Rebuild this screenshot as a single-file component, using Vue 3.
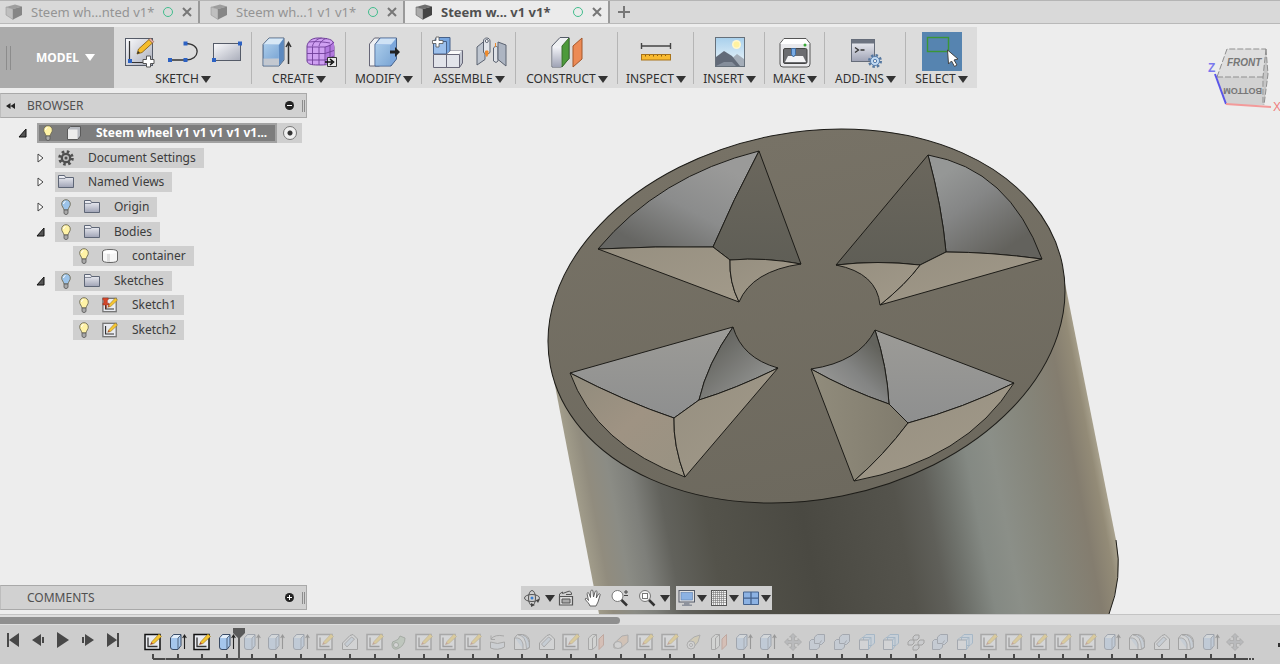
<template>
  <div class="app">
    <!-- 图标库 -->
    <svg class="sprite" width="0" height="0" aria-hidden="true">
      <defs>
        <linearGradient id="steel" x1="0" y1="0" x2="1" y2="1">
          <stop offset="0" stop-color="#fbfbfd" />
          <stop offset="1" stop-color="#a9adba" />
        </linearGradient>
        <linearGradient id="steelV" x1="0" y1="0" x2="0" y2="1">
          <stop offset="0" stop-color="#f4f5f9" />
          <stop offset="1" stop-color="#9fa3b5" />
        </linearGradient>
        <linearGradient id="blue" x1="0" y1="0" x2="1" y2="1">
          <stop offset="0" stop-color="#a9cbea" />
          <stop offset="1" stop-color="#7fa9d6" />
        </linearGradient>
        <linearGradient id="sky" x1="0" y1="0" x2="0" y2="1">
          <stop offset="0" stop-color="#a8d0ec" />
          <stop offset="1" stop-color="#eef6fa" />
        </linearGradient>
      </defs>

      <symbol id="i-sketch" viewBox="0 0 32 32">
        <rect x="2.500" y="2.500" width="27" height="27" fill="url(#steel)" stroke="#555b68" />
        <path d="M6.500 5v21.500H26" fill="none" stroke="#333" stroke-width="1.200" />
        <rect x="5" y="23" width="4" height="4" fill="#2c62c4" />
        <path d="M14 18l1.500-5L26 3.500l3.500 3.500L19 16.500z" fill="#f5bd2d" stroke="#80580f" stroke-width=".8" />
        <path d="M26 3.500l1.500-1.200 3.400 3.400-1.400 1.300z" fill="#efb5a5" stroke="#8a5b4b" stroke-width=".6" />
        <path d="M14 18l1-3 2 1.800z" fill="#333" />
        <path d="M23.500 20h4v3.500H31v4h-3.500V31h-4v-3.500H20v-4h3.500z" fill="#fff" stroke="#555" />
      </symbol>
      <symbol id="i-line" viewBox="0 0 32 32">
        <path d="M3 24h16M18 7.500c17 0 15 16.500 1 16.500" fill="none" stroke="#333" stroke-width="1.300" />
        <path d="M1 22h4v4H1zM16.500 22h4v4h-4zM16.500 5.500h4v4h-4z" fill="#2c62c4" />
      </symbol>
      <symbol id="i-rect" viewBox="0 0 32 32">
        <rect x="2.500" y="7.500" width="27" height="17" fill="url(#steel)" stroke="#555b68" />
        <path d="M1 22h4v4H1zM27 5.500h4v4h-4z" fill="#2c62c4" />
      </symbol>
      <symbol id="i-extrude" viewBox="0 0 32 32">
        <path d="M2 8.500l6-6.500h15v22l-5 6H2z" fill="#86b0dd" stroke="#52657e" />
        <path d="M2.500 8.500L8 2.500h14.500L18 8.500z" fill="#d8e8f5" />
        <path d="M3 9h14v13H3z" fill="url(#blue)" />
        <path d="M2.500 22.500H18v7H2.500z" fill="#c3c8d0" />
        <path d="M18 9l4.500-6v20.500L18 29.500z" fill="#5c89bf" />
        <path d="M27.500 28V8M25 11l2.500-4.500L30 11" fill="none" stroke="#333" stroke-width="1.500" />
      </symbol>
      <symbol id="i-form" viewBox="0 0 32 32">
        <path d="M2 10c1-5 5-8 11-8 7 0 14 1 15 4l1 5v13c-2 4-7 5-13 5-8 0-13 0-14-4z" fill="#cfa0f2" stroke="#6f3e99" />
        <path d="M20 11l9-5v18l-8 5z" fill="#b279df" />
        <path d="M2 11h18c4-1 7-2 9-5M2 17.500h18l9-3M2 24h18l9-4M7.500 10.500V29M14 11v18M20 11v18M25 9v18M7.500 10c1-4 4-7 9-8M14 10c1-4 4-7 8-7.500M4 6c7-1 15 0 21 1" fill="none" stroke="#6f3e99" stroke-width=".9" />
        <path d="M22.500 21.500h9v9h-9z" fill="#e8e8e8" stroke="#333" />
        <path d="M20 26h7M25 23l3.500 3-3.500 3" fill="none" stroke="#111" stroke-width="1.600" />
      </symbol>
      <symbol id="i-modify" viewBox="0 0 32 32">
        <path d="M1.500 8l5-6h5v28h-10z" fill="#eef0f3" stroke="#667" />
        <path d="M7 8.500L12 2h16.500v21L23 30H7z" fill="#7ca7dc" stroke="#46618a" />
        <path d="M7.500 8.500l5-6H28l-5 6z" fill="#cfe2f5" />
        <path d="M7.500 9H22v20.500H7.500z" fill="url(#blue)" />
        <path d="M22 14.500h5V11l5 5-5 5v-3.500h-5z" fill="#222" />
      </symbol>
      <symbol id="i-component" viewBox="0 0 32 32">
        <path d="M2.500 6l3-4.500H19V18h-14z" fill="#77a6e0" stroke="#46618a" />
        <path d="M2.500 5.500h13V18h-13z" fill="#9cc0ec" stroke="#46618a" />
        <path d="M15.500 18.500l4-4h12V27l-3 4.500h-13z" fill="#c4c8d2" stroke="#667" />
        <path d="M2.500 18.500h13v13h-13zM15.500 18.500h13v13h-13z" fill="#e2e4ea" stroke="#667" />
        <path d="M16 18l4-3.500h11L28 18z" fill="#fafafa" />
        <path d="M5 1h3v3.500h4v3H8V11H5V7.500H1.500v-3H5z" fill="#fff" stroke="#555" stroke-width=".8" />
      </symbol>
      <symbol id="i-joint" viewBox="0 0 32 32">
        <path d="M2 11l8-6.500v19L2 29z" fill="#bfc6d0" stroke="#5b6270" />
        <path d="M8.500 5c0-4 6.500-4 6.500 0v11.500l-3 2-3.500-2z" fill="#e2e5ea" stroke="#5b6270" />
        <circle cx="11.800" cy="5" r="1.500" fill="#fff" stroke="#5b6270" />
        <path d="M18.500 12c1-2 4.500-2 4.500 0v13l-2 1.500-2.500-1.500z" fill="#dfe2e7" stroke="#5b6270" />
        <path d="M23 6l8 3v21l-8-6.500z" fill="#adb5c2" stroke="#5b6270" />
        <path d="M10.500 15h2.500v3l-1.200 2.500-1.300-2.500zM20.500 7v4" fill="#ef8b2c" stroke="#ef8b2c" />
      </symbol>
      <symbol id="i-construct" viewBox="0 0 32 32">
        <path d="M1 10l8-8.500h9v21L10.500 31H1z" fill="#eef0f2" stroke="#555b68" />
        <path d="M1.500 10.500h9V31h-9z" fill="url(#steelV)" />
        <path d="M11 10l7-8v20.500L11 31z" fill="#4d9a3b" stroke="#396d2c" />
        <path d="M22 10l9-8v21l-9 8z" fill="#ec8a55" stroke="#a4562b" />
      </symbol>
      <symbol id="i-measure" viewBox="0 0 32 32">
        <path d="M1.500 7v6M30.500 7v6M1.500 10h29" fill="none" stroke="#444" stroke-width="1.400" />
        <rect x="1.500" y="18.500" width="29" height="5.500" fill="#f8ba31" stroke="#a9741a" />
        <path d="M5.500 19v1.500M9.500 19v1M13.500 19v1.500M17.500 19v1M21.500 19v1.500M25.500 19v1" stroke="#8a5f13" />
      </symbol>
      <symbol id="i-picture" viewBox="0 0 32 32">
        <rect x="1.500" y="1.500" width="29" height="29" fill="url(#sky)" stroke="#66707a" />
        <circle cx="22.500" cy="8.500" r="4.500" fill="#fff8cf" />
        <circle cx="22.500" cy="8.500" r="3" fill="#fff2a0" />
        <path d="M14 26l9-8 7 5v7H14z" fill="#a4adb8" />
        <path d="M2 21l8-6 8 5 8 10H2z" fill="#626a78" />
        <path d="M2 30l8-4 8 0 4 4z" fill="#858e9b" />
      </symbol>
      <symbol id="i-make" viewBox="0 0 32 32">
        <path d="M5 2.500h22l4 5V28q0 3-3 3H4q-3 0-3-3V7.500z" fill="#e9e9ec" stroke="#555" />
        <path d="M5 3h22l3.500 5h-29z" fill="#fff" />
        <rect x="4.500" y="12.500" width="23.500" height="15" rx="1.500" fill="#6b6c70" stroke="#444" />
        <path d="M9 20h15l3 6H6z" fill="#f4f4f6" />
        <path d="M12.500 12.500h4v6l-2 2.500-2-2.500z" fill="#79abe4" stroke="#3f6ea5" />
        <circle cx="26" cy="9" r="1.500" fill="#37a935" />
      </symbol>
      <symbol id="i-addins" viewBox="0 0 32 32">
        <rect x="1.500" y="3.500" width="23" height="22" fill="url(#steelV)" stroke="#666d7a" />
        <path d="M2 4h22v3.500H2z" fill="#6d7481" />
        <path d="M5 11.500l3.500 2.500L5 16.500M10.500 14h4" fill="none" stroke="#333" stroke-width="1.300" />
        <circle cx="25" cy="25" r="5.500" fill="none" stroke="#55779f" stroke-width="3" stroke-dasharray="2.300 2" />
        <circle cx="25" cy="25" r="4.500" fill="#c3dcf5" stroke="#5a7fae" />
        <circle cx="25" cy="25" r="1.700" fill="#e8e8e8" stroke="#5a7fae" />
      </symbol>
      <symbol id="i-select" viewBox="0 0 40 39">
        <rect x="5.500" y="5.500" width="21" height="14" fill="none" stroke="#3b9636" stroke-width="1.400" />
        <path d="M25.500 18l1 14 3-3 3 5.500 2.500-1.500-3-5 4-1z" fill="#fff" stroke="#444" />
      </symbol>

      <symbol id="i-cube" viewBox="0 0 18 16">
        <path d="M1 3l9-2.500L17 2.500 8 5z" fill="#6e6e6e" />
        <path d="M1 3l7 2v10.500L1 11z" fill="#aaa" stroke="#555" stroke-width=".5" />
        <path d="M8 5l9-2.500V11l-9 4.500z" fill="#444" />
      </symbol>
      <symbol id="i-bulb" viewBox="0 0 12 16">
        <path d="M6 .7a4.300 4.300 0 0 0-4.300 4.500c0 2.300 1.800 3.200 2.300 5.800h4c.5-2.600 2.300-3.500 2.300-5.800A4.300 4.300 0 0 0 6 .7z" fill="currentColor" stroke="#6d6a55" stroke-width=".9" />
        <path d="M4 11h4v3.500L6 15.700l-2-1.200z" fill="#a9a9a9" stroke="#555" stroke-width=".8" />
        <path d="M3.500 5q0-2 2-2.500" fill="none" stroke="#fff" />
      </symbol>
      <symbol id="i-box" viewBox="0 0 16 16">
        <path d="M1.500 4l3-2.500h10v9.500l-3 3.500h-10z" fill="#b7bac0" stroke="#5b5b5b" />
        <path d="M2 4.500h9.500V14H2z" fill="#ececec" />
      </symbol>
      <symbol id="i-gear" viewBox="0 0 16 16">
        <circle cx="8" cy="8" r="6.300" fill="none" stroke="#4f4f4f" stroke-width="3" stroke-dasharray="2.500 2.450" />
        <circle cx="8" cy="8" r="4.200" fill="#bbb" stroke="#4f4f4f" stroke-width="2.200" />
        <circle cx="8" cy="8" r="1.500" fill="#4f4f4f" />
      </symbol>
      <symbol id="i-folder" viewBox="0 0 16 16">
        <path d="M.5 13.500v-12h6l1 2h8v10z" fill="url(#steelV)" stroke="#5e6676" />
        <path d="M1 4.500h6l1-1" fill="none" stroke="#5e6676" stroke-width=".7" />
      </symbol>
      <symbol id="i-body" viewBox="0 0 16 16">
        <path d="M.5 4q0-2.500 7.500-2.500T15.500 4v8q0 2.500-7.500 2.500T.5 12z" fill="#f6f6f6" stroke="#666" />
        <path d="M5 5.500h3v8.500H5z" fill="#dedede" />
        <ellipse cx="8" cy="4" rx="6.500" ry="1.700" fill="#fff" />
      </symbol>
      <symbol id="i-draw" viewBox="0 0 18 18">
        <rect x="1" y="1.500" width="15" height="15" fill="#e9ebf0" stroke="currentColor" stroke-width="1.500" />
        <path d="M4 4.500V13.500h9.500" fill="none" stroke="#333" stroke-width="1.300" />
        <path d="M6.500 11.500L8 8.500 15 1l2.500 2.500-7.500 7z" fill="#f5c531" stroke="#96731a" stroke-width=".6" />
        <path d="M6.500 11.500l1-2.200 1.500 1.200z" fill="#a33" />
      </symbol>
      <symbol id="i-pin" viewBox="0 0 18 18">
        <path d="M1 1h6v2L6 4v3h2v2H5v4L4 9H1V7h1V4L1 3z" fill="#d4472b" stroke="#8b2a18" stroke-width=".5" />
      </symbol>

      <!-- 时间轴图标 -->
      <symbol id="t-extrude" viewBox="0 0 18 18">
        <path d="M1.500 5l3-3.500h7.500v11l-3 4h-5q-2.500 0-2.500-2.500z" fill="#a5c6ec" stroke="#3b4c66" />
        <path d="M2 5l3-3h6.500L9 5z" fill="#e3eef9" />
        <path d="M9 5v11M9 5l3-3" stroke="#3b4c66" stroke-width=".8" />
        <path d="M15.500 16V3M13.700 5l1.800-3 1.800 3" fill="none" stroke="#222" stroke-width="1.100" />
      </symbol>
      <symbol id="t-chamfer" viewBox="0 0 18 18">
        <path d="M1.500 16.500V10L9 2.500l3-1L16.500 6v10.500z" fill="#dfe2e6" stroke="#444" />
        <path d="M3.500 11l7-7 3 2-7.500 8z" fill="#b9cde6" stroke="#444" stroke-width=".8" />
      </symbol>
      <symbol id="t-fillet" viewBox="0 0 18 18">
        <path d="M1.500 16.500V5l3-3.500h5q7 1 7 8v5l-3 2z" fill="#dfe2e6" stroke="#444" />
        <path d="M5 2q8 0 8.500 14l3-2q0-10-7-12M2 5q6-1 8 6v5" fill="#b9cde6" stroke="#444" stroke-width=".8" />
      </symbol>
      <symbol id="t-loft" viewBox="0 0 18 18">
        <path d="M2 11q0-3 3-3 4-1 5-5l5 2q0 8-8 11-5 1-5-5z" fill="#9db79a" stroke="#4b5f48" />
        <circle cx="6" cy="12" r="2.500" fill="#e8e8e8" stroke="#4b5f48" />
      </symbol>
      <symbol id="t-sweep" viewBox="0 0 18 18">
        <path d="M1.500 11L10 3l6-1v7l-7 6H2z" fill="#dca982" stroke="#666" />
        <ellipse cx="6" cy="12" rx="4" ry="3.500" fill="#ddd" stroke="#666" />
      </symbol>
      <symbol id="t-pipe" viewBox="0 0 18 18">
        <path d="M3 9l6-5 6-2-2 7-5 6z" fill="#d9c682" stroke="#666" />
        <circle cx="6" cy="12" r="4" fill="#ddd" stroke="#666" />
        <circle cx="6" cy="12" r="1.500" fill="#fff" stroke="#666" />
      </symbol>
      <symbol id="t-revolve" viewBox="0 0 18 18">
        <path d="M1.500 9v6q7 3 14-1V9q-7 3-14 0z" fill="#c9d3df" stroke="#555" />
        <path d="M2 6q4-5 13-3M2 2.500V6.500h4" fill="none" stroke="#555" />
      </symbol>
      <symbol id="t-plane" viewBox="0 0 18 18">
        <path d="M1.500 5l4-3.500h4V13l-4 3.500h-4zM5.500 5v11M5.500 5l4-3.500" fill="#dfe3e0" stroke="#555" />
        <path d="M12 6l4.500-4.500V12L12 16.500z" fill="#e8a183" stroke="#a0543a" />
      </symbol>
      <symbol id="t-move" viewBox="0 0 18 18">
        <path d="M9 .5L12.500 4h-2v3.500H14v-2L17.500 9 14 12.500v-2h-3.500V14h2L9 17.500 5.500 14h2v-3.500H4v2L.5 9 4 5.500v2h3.500V4h-2z" fill="#8c9096" stroke="#555" stroke-width=".7" />
      </symbol>
      <symbol id="t-combine" viewBox="0 0 18 18">
        <path d="M1.500 8.500l2-2h3V4l3-2.500h7V8.500l-3 3h-2v2.500l-2.500 2.500H1.500z" fill="#b4c8e3" stroke="#48566c" />
        <path d="M6.500 6.500v4h5l2-3" fill="none" stroke="#48566c" />
      </symbol>
      <symbol id="t-copy" viewBox="0 0 18 18">
        <path d="M5.500 4l2.500-2.500h8.500V10L14 12.500H5.500z" fill="#bcd6ee" stroke="#4f86b8" />
        <path d="M1.500 7h9v9.500h-9z" fill="#dfe3e8" stroke="#48566c" />
        <path d="M1.500 7L4 4.500h9V13l-2.500 3.500V7L13 4.500" fill="none" stroke="#4f86b8" />
      </symbol>
      <symbol id="t-pattern" viewBox="0 0 18 18">
        <path d="M6 4l2-2h4v3l-2 2H6zM1 9l2-2h4v3l-2 2H1zM11 9l2-2h4v3l-2 2h-4zM6 14l2-2h4v3l-2 2H6z" fill="#c5c9cf" stroke="#444" />
      </symbol>

      <!-- 导航栏图标 -->
      <symbol id="n-orbit" viewBox="0 0 18 18">
        <ellipse cx="9" cy="9" rx="7.500" ry="3.500" fill="none" stroke="#555" />
        <ellipse cx="9" cy="9" rx="3.500" ry="7.500" fill="none" stroke="#555" />
        <circle cx="9" cy="9" r="1.500" fill="#3d7fce" />
        <path d="M13 11l4-1-2 4zM8 14l4 2-4 2z" fill="#444" />
      </symbol>
      <symbol id="n-look" viewBox="0 0 18 18">
        <path d="M2.500 7.500h13v8.500h-13z" fill="#ddd" stroke="#555" stroke-width="1.200" />
        <path d="M5 10h8v4H5z" fill="#aaa" stroke="#555" />
        <path d="M2.500 7V5l3-2v1.500l7-2.500 2 2v1.500H9" fill="none" stroke="#555" />
      </symbol>
      <symbol id="n-pan" viewBox="0 0 18 18">
        <path d="M6 17c-1-3-3-4-5-7 1-1.500 2.500 0 3.500 1.500L3 4.500c1-1.500 2-.5 2.200.5L6.500 8.500 6.800 2c.6-1.500 2-1.200 2.100 0L9.500 8l1.700-5.500c.8-1 2-.5 1.800.6L12.300 9l2.200-4c1-.7 2 .1 1.600 1L14 13l-2 4z" fill="#fff" stroke="#555" stroke-width=".9" />
      </symbol>
      <symbol id="n-zoom" viewBox="0 0 18 18">
        <circle cx="6.500" cy="7" r="5.500" fill="#fff" stroke="#777" />
        <path d="M10.500 11l5.500 5.500" stroke="#333" stroke-width="2.500" />
        <path d="M13 3h4M15 1v4M13 6.500h4" stroke="#444" />
      </symbol>
      <symbol id="n-fit" viewBox="0 0 18 18">
        <circle cx="7" cy="7" r="5.500" fill="#f2f2f2" stroke="#777" />
        <rect x="4.500" y="4.500" width="5" height="5" fill="#fff" stroke="#777" />
        <path d="M11 11l5.500 5.500" stroke="#333" stroke-width="2.500" />
      </symbol>
      <symbol id="n-display" viewBox="0 0 18 18">
        <rect x="1" y="1.500" width="15.500" height="11.500" fill="#e2e2e2" stroke="#555b68" />
        <rect x="3" y="3.500" width="11.500" height="7.500" fill="#8cb2e3" stroke="#5c7cab" stroke-width=".6" />
        <path d="M6 13h5.500v2.500H14V17H4v-1.500h2z" fill="#8d929c" />
      </symbol>
      <symbol id="n-grid" viewBox="0 0 18 18">
        <rect x="1.500" y="1.500" width="15" height="15" fill="#f2f2f2" stroke="#555" />
        <path d="M3.500 1v15M5.500 1v15M7.500 1v15M9.500 1v15M11.500 1v15M13.500 1v15M1 3.500h15M1 5.500h15M1 7.500h15M1 9.500h15M1 11.500h15M1 13.500h15" stroke="#777" stroke-width=".6" />
      </symbol>
      <symbol id="n-views" viewBox="0 0 18 18">
        <path d="M1.500 3h15v12.500h-15z" fill="#8cb2e3" stroke="#45628c" />
        <path d="M9 3v12.500M1.500 9.200h15" stroke="#45628c" stroke-width="1.300" />
      </symbol>
    </svg>

    <nav class="tabs">
      <div v-for="tab in tabs" :key="tab.name" class="tab" :class="{ active: tab.active }">
        <svg class="tab-icon"><use href="#i-cube" /></svg>
        <span class="tab-name">{{ tab.name }}</span>
        <i class="ring"></i>
        <button class="tab-close" aria-label="Close tab">
          <svg width="10" height="10" viewBox="0 0 10 10"><path d="M1 1l8 8M9 1L1 9" /></svg>
        </button>
      </div>
      <button class="tab-add" aria-label="New tab">
        <svg width="12" height="12" viewBox="0 0 12 12"><path d="M6 0v12M0 6h12" /></svg>
      </button>
    </nav>

    <header class="toolbar">
      <button class="mode"><i class="grip"></i><span>MODEL</span><i class="caret"></i></button>
      <div
        v-for="group in groups"
        :key="group.label"
        class="group"
        :style="{ width: group.width + 'px' }"
      >
        <div class="group-icons">
          <button
            v-for="icon in group.icons"
            :key="icon"
            class="tool"
            :class="{ picked: icon === 'select' }"
            :aria-label="icon"
          >
            <svg><use :href="'#i-' + icon" /></svg>
          </button>
        </div>
        <button class="group-label">{{ group.label }}<i class="caret"></i></button>
      </div>
    </header>

    <main class="workspace">
      <svg class="model" viewBox="0 88 1280 526" preserveAspectRatio="xMidYMid slice">
        <defs>
          <linearGradient id="side" gradientUnits="userSpaceOnUse" x1="584" y1="540" x2="1097" y2="443">
            <stop offset="0" stop-color="#a29d8b" />
            <stop offset=".03" stop-color="#918c7e" />
            <stop offset=".07" stop-color="#8b8c85" />
            <stop offset=".11" stop-color="#7e7f7a" />
            <stop offset=".16" stop-color="#62625c" />
            <stop offset=".24" stop-color="#54534b" />
            <stop offset=".42" stop-color="#4a4942" />
            <stop offset=".6" stop-color="#54534c" />
            <stop offset=".66" stop-color="#5f5f59" />
            <stop offset=".7" stop-color="#6e716b" />
            <stop offset=".75" stop-color="#848983" />
            <stop offset=".8" stop-color="#8b8f88" />
            <stop offset=".88" stop-color="#85857a" />
            <stop offset=".95" stop-color="#847d6f" />
            <stop offset=".985" stop-color="#938b77" />
            <stop offset="1" stop-color="#a8a18d" />
          </linearGradient>
          <linearGradient id="cap" x1="0" y1="0" x2="0" y2="1">
            <stop offset="0" stop-color="#777266" />
            <stop offset="1" stop-color="#6d695e" />
          </linearGradient>
          <linearGradient id="wallA" gradientUnits="userSpaceOnUse" x1="720" y1="165" x2="670" y2="260">
            <stop offset="0" stop-color="#9a9a99" />
            <stop offset=".5" stop-color="#8b8c8c" />
            <stop offset="1" stop-color="#666663" />
          </linearGradient>
          <linearGradient id="wallB" gradientUnits="userSpaceOnUse" x1="935" y1="180" x2="990" y2="260">
            <stop offset="0" stop-color="#959796" />
            <stop offset=".4" stop-color="#858686" />
            <stop offset="1" stop-color="#63625d" />
          </linearGradient>
          <linearGradient id="shade" x1="0" y1="0" x2="0" y2="1">
            <stop offset="0" stop-color="#6b675d" />
            <stop offset="1" stop-color="#5f5e56" />
          </linearGradient>
          <linearGradient id="sand" x1="0" y1="0" x2="1" y2="1">
            <stop offset="0" stop-color="#968f80" />
            <stop offset="1" stop-color="#a29a8a" />
          </linearGradient>
          <linearGradient id="sandDark" x1="0" y1="0" x2="1" y2="1">
            <stop offset="0" stop-color="#908b7c" />
            <stop offset=".5" stop-color="#9f9383" />
            <stop offset="1" stop-color="#989282" />
          </linearGradient>
          <linearGradient id="olive" x1="0" y1="0" x2="1" y2="0">
            <stop offset="0" stop-color="#918c7c" />
            <stop offset="1" stop-color="#807b6d" />
          </linearGradient>
          <linearGradient id="silver" x1="0" y1="0" x2="0" y2="1">
            <stop offset="0" stop-color="#9c9b97" />
            <stop offset="1" stop-color="#8e8f8f" />
          </linearGradient>
          <linearGradient id="curl" x1="0" y1="0" x2="1" y2="1">
            <stop offset=".2" stop-color="#63635e" />
            <stop offset=".8" stop-color="#929391" />
          </linearGradient>
          <linearGradient id="curlBack" x1="0" y1="1" x2="1" y2="0">
            <stop offset=".2" stop-color="#989896" />
            <stop offset=".5" stop-color="#838483" />
            <stop offset=".8" stop-color="#63635d" />
          </linearGradient>
        </defs>
        <path d="M552 370L599 614H1109Q1121 580 1118 553L1116 540 1065 283z" fill="url(#side)" />
        <path d="M1116 540Q1123 578 1109 614" class="edge" />
        <ellipse cx="806.500" cy="316" rx="261" ry="183.500" transform="rotate(-11.200 806.500 316)" fill="url(#cap)" class="edge" />
        <g class="edge">
          <path v-for="(face, i) in faces" :key="i" :d="face.d" :fill="`url(#${face.fill})`" />
        </g>
      </svg>

      <section class="browser">
        <header class="panel-head">
          <svg class="collapse" width="11" height="8" viewBox="0 0 11 8"><path d="M5.500 1v6L1 4zM10 1v6L5.500 4z" /></svg>
          <h2>BROWSER</h2>
          <button class="round" aria-label="Minimize"><svg width="9" height="9" viewBox="0 0 9 9"><path d="M2 4.500h5" /></svg></button>
          <i class="grip small"></i>
        </header>
        <ul class="tree">
          <li v-for="node in nodes" :key="node.name" :class="['node', 'level-' + node.level]">
            <svg v-if="node.open" class="arrow" viewBox="0 0 9 10"><path d="M8 1v8H1z" class="opened" /></svg>
            <svg v-else-if="node.open === false" class="arrow" viewBox="0 0 9 10"><path d="M2 1l5 4-5 4z" class="closed" /></svg>
            <div class="chip" :class="{ root: node.level === 0 }">
              <svg v-if="node.bulb" class="bulb" :class="node.bulb"><use href="#i-bulb" /></svg>
              <svg class="node-icon">
                <use :href="'#i-' + node.icon" />
                <use v-if="node.pinned" href="#i-pin" />
              </svg>
              <span>{{ node.name }}</span>
            </div>
            <label v-if="node.level === 0" class="radio-cell">
              <input type="radio" checked aria-label="Activate component" />
            </label>
          </li>
        </ul>
      </section>

      <section class="panel-head comments">
        <h2>COMMENTS</h2>
        <button class="round" aria-label="Add comment"><svg width="9" height="9" viewBox="0 0 9 9"><path d="M2 4.500h5M4.500 2v5" /></svg></button>
        <i class="grip small"></i>
      </section>

      <div class="nav-bars">
        <div class="nav-bar">
          <button aria-label="Orbit"><svg><use href="#n-orbit" /></svg><i class="caret"></i></button>
          <button class="plain" aria-label="Look at"><svg><use href="#n-look" /></svg></button>
          <button class="plain" aria-label="Pan"><svg><use href="#n-pan" /></svg></button>
          <button class="plain" aria-label="Zoom"><svg><use href="#n-zoom" /></svg></button>
          <button aria-label="Fit"><svg><use href="#n-fit" /></svg><i class="caret"></i></button>
        </div>
        <div class="nav-bar tight">
          <button aria-label="Display settings"><svg><use href="#n-display" /></svg><i class="caret"></i></button>
          <button aria-label="Grid and snaps"><svg><use href="#n-grid" /></svg><i class="caret"></i></button>
          <button aria-label="Viewports"><svg><use href="#n-views" /></svg><i class="caret"></i></button>
        </div>
      </div>
    </main>

    <!-- 视图方块 -->
    <svg class="view-cube" width="80" height="76" viewBox="0 0 80 76">
      <path d="M27 9h39l-3 28H17z" fill="#dedede" />
      <path d="M17 37h46l1 28H26z" fill="#d2d2d2" />
      <path d="M66 9l2 25-4 31-1-28z" fill="#c6c6c6" />
      <path d="M17 37L27 9h39M66 9l2 25-4 31M66 9l-3 28v28M17 37h46" class="dash" />
      <path d="M15 34l11 30" stroke="#5a55e8" stroke-width="2" />
      <path d="M26 64l45 3" stroke="#f39a9a" stroke-width="2" />
      <text x="27" y="26" class="face">FRONT</text>
      <text x="-62" y="-48" transform="rotate(180)" class="face bottom">BOTTOM</text>
      <text x="8" y="32" class="axis-z">Z</text>
      <text x="73" y="71" class="axis-x">X</text>
    </svg>

    <footer class="timeline">
      <div class="scroll"><div class="thumb"></div></div>
      <div class="track">
        <div class="playback">
          <button aria-label="First"><svg viewBox="0 0 14 16"><path d="M1 1h2v14H1zM13 1v14L3 8z" /></svg></button>
          <button aria-label="Step back"><svg viewBox="0 0 14 16"><path d="M10 2v12L1 8zM11 5h2v6h-2z" /></svg></button>
          <button aria-label="Play"><svg viewBox="0 0 14 16"><path d="M1 0l12 8-12 8z" /></svg></button>
          <button aria-label="Step forward"><svg viewBox="0 0 14 16"><path d="M4 2v12l9-6zM1 5h2v6H1z" /></svg></button>
          <button aria-label="Last"><svg viewBox="0 0 14 16"><path d="M11 1h2v14h-2zM1 1v14l10-7z" /></svg></button>
        </div>
        <div class="steps">
          <div v-for="(step, i) in steps" :key="i" class="step" :class="{ done: i < position }">
            <svg class="step-icon"><use :href="'#' + step" /></svg>
            <svg v-if="i === position - 1" class="marker" viewBox="0 0 12 32">
              <path d="M0 0h12v5L7 10v22H5V10L0 5z" />
            </svg>
          </div>
        </div>
        <i class="dashes"></i>
        <i class="more"></i>
      </div>
    </footer>
  </div>
</template>

<script setup>
import { ref } from 'vue'

const tabs = ref([
  { name: 'Steem wh...nted v1*' },
  { name: 'Steem wh...1 v1 v1*' },
  { name: 'Steem w... v1 v1*', active: true }
])

const groups = [
  { label: 'SKETCH', width: 138, icons: ['sketch', 'line', 'rect'] },
  { label: 'CREATE', width: 94, icons: ['extrude', 'form'] },
  { label: 'MODIFY', width: 76, icons: ['modify'] },
  { label: 'ASSEMBLE', width: 94, icons: ['component', 'joint'] },
  { label: 'CONSTRUCT', width: 102, icons: ['construct'] },
  { label: 'INSPECT', width: 76, icons: ['measure'] },
  { label: 'INSERT', width: 71, icons: ['picture'] },
  { label: 'MAKE', width: 60, icons: ['make'] },
  { label: 'ADD-INS', width: 81, icons: ['addins'] },
  { label: 'SELECT', width: 71, icons: ['select'] }
]

const nodes = ref([
  { name: 'Steem wheel v1 v1 v1 v1 v1...', level: 0, open: true, bulb: 'on', icon: 'box' },
  { name: 'Document Settings', level: 1, open: false, icon: 'gear' },
  { name: 'Named Views', level: 1, open: false, icon: 'folder' },
  { name: 'Origin', level: 1, open: false, bulb: 'off', icon: 'folder' },
  { name: 'Bodies', level: 1, open: true, bulb: 'on', icon: 'folder' },
  { name: 'container', level: 2, bulb: 'on', icon: 'body' },
  { name: 'Sketches', level: 1, open: true, bulb: 'off', icon: 'folder' },
  { name: 'Sketch1', level: 2, bulb: 'on', icon: 'draw', pinned: true },
  { name: 'Sketch2', level: 2, bulb: 'on', icon: 'draw' }
])

// 端面上四个凹槽的各个面
const faces = [
  { fill: 'wallA', d: 'M598 249Q659 176 759 151Q733 200 713 247Q655 246 598 249z' },
  { fill: 'shade', d: 'M759 151L801 264Q765 257 730 260L713 247Q733 200 759 151z' },
  { fill: 'sand', d: 'M598 249Q655 246 713 247L730 260Q729 282 739 302z' },
  { fill: 'sand', d: 'M730 260Q765 257 801 264Q752 271 739 302Q729 282 730 260z' },
  { fill: 'wallB', d: 'M928 155Q1009 169 1042 259Q990 252 946 252Q942 207 928 155z' },
  { fill: 'shade', d: 'M928 155L836 265Q878 260 920 265L946 252Q942 207 928 155z' },
  { fill: 'sand', d: 'M1042 259Q990 252 946 252L920 265Q906 284 880 305z' },
  { fill: 'sand', d: 'M836 265Q878 260 920 265Q906 284 880 305Q877 273 836 265z' },
  { fill: 'silver', d: 'M733 327L570 373Q626 402 674 418L699 400Q707 364 733 327z' },
  { fill: 'curl', d: 'M733 327Q742 358 778 368Q735 389 699 400Q707 364 733 327z' },
  { fill: 'sandDark', d: 'M570 373Q596 445 685 477Q673 445 674 418Q626 402 570 373z' },
  { fill: 'sand', d: 'M778 368L685 477Q673 445 674 418L699 400Q735 389 778 368z' },
  { fill: 'silver', d: 'M875 330L1014 383Q964 408 908 423L889 404Q887 366 875 330z' },
  { fill: 'curlBack', d: 'M875 330Q859 362 811 369Q848 390 889 404Q887 366 875 330z' },
  { fill: 'olive', d: 'M811 369L854 481Q884 455 908 423L889 404Q848 390 811 369z' },
  { fill: 'sand', d: 'M1014 383Q966 460 854 481Q884 455 908 423Q964 408 1014 383z' }
]

const S = 'i-draw'
const E = 't-extrude'
const steps = [
  S, E, S, E, E, E, E, S, 't-chamfer', S, 't-loft', S, S, S, 't-revolve', 't-fillet', 't-chamfer',
  S, 't-plane', 't-sweep', S, S, 't-pipe', 't-plane', E, E, 't-move', 't-combine', 't-combine',
  't-copy', 't-copy', 't-pattern', 't-combine', 't-copy', S, S, S, S, S, E, 't-fillet',
  't-chamfer', 't-fillet', E, 't-move'
]
const position = ref(4)
</script>

<style>
body {
  margin: 0;
  background: #ededed;
}
</style>

<style scoped>
.app {
  position: relative;
  display: flex;
  flex-direction: column;
  height: 100vh;
  overflow: hidden;
  background: #ededed;
  color: #3c3c3c;
  font: 12px/16px 'Noto Sans', 'Open Sans', sans-serif;
}

.sprite {
  position: absolute;
}

button {
  display: flex;
  align-items: center;
  padding: 0;
  border: 0;
  background: none;
  color: inherit;
  font: inherit;
}

.caret {
  flex: none;
  width: 0;
  border: 5px solid transparent;
  border-top: 7px solid #333;
  border-bottom: 0;
}

.grip {
  width: 3px;
  height: 24px;
  border: 1px solid #8c8c8c;
  border-width: 0 1px;
}

.grip.small {
  width: 1px;
  height: 12px;
}

/* 标签栏 */
.tabs {
  display: flex;
  height: 22px;
  border-top: 1px solid #b5b5b5;
  border-bottom: 1px solid #b9b9b9;
  background: #d9d9d9;
}

.tab {
  display: flex;
  align-items: center;
  box-sizing: border-box;
  width: 205px;
  padding: 0 6px 0 10px;
  border-right: 2px solid #9a9a9a;
  color: #949494;
  font-size: 13px;
}

.tab:first-child {
  width: 200px;
  padding-left: 5px;
}

.tab.active {
  background: #ebebeb;
  color: #505050;
  font-weight: bold;
}

.tab-icon {
  width: 18px;
  height: 16px;
  margin-right: 8px;
  opacity: 0.55;
}

.tab.active .tab-icon {
  opacity: 1;
}

.tab-name {
  flex: 1;
  white-space: nowrap;
}

.ring {
  width: 8px;
  height: 8px;
  margin-right: 9px;
  border: 1px solid #41bd8d;
  border-radius: 50%;
}

.tab-close path,
.tab-add path {
  fill: none;
  stroke: #777;
  stroke-width: 2;
}

.tab-add {
  margin-left: 8px;
}

/* 工具栏 */
.toolbar {
  display: flex;
  width: max-content;
  height: 61px;
  margin-top: 3px;
  background: #dcdcdc;
}

.mode {
  width: 114px;
  gap: 6px;
  background: #ababab;
  color: #fff;
  font-weight: bold;
}

.mode .grip {
  margin: 0 19px 0 6px;
}

.mode .caret {
  border-top-color: #fff;
}

.group {
  display: flex;
  flex-direction: column;
  align-items: center;
  box-sizing: border-box;
  padding-top: 5px;
  background: linear-gradient(#b5b5b5, #b5b5b5) right 5px / 1px 52px no-repeat;
}

.group:last-child {
  background: none;
}

.group-icons {
  display: flex;
  align-items: center;
  gap: 12px;
  height: 39px;
}

.tool svg {
  width: 32px;
  height: 32px;
}

.tool.picked {
  background: #5684b0;
}

.tool.picked svg {
  width: 40px;
  height: 39px;
}

.group-label {
  gap: 2px;
  line-height: 16px;
  color: #2f2f2f;
}

/* 工作区 */
.workspace {
  position: relative;
  display: flex;
  flex: 1;
  flex-direction: column;
  justify-content: space-between;
  min-height: 0;
  padding: 5px 0 4px;
}

.model {
  position: absolute;
  inset: 0;
  width: 100%;
  height: 100%;
}

.edge {
  stroke: #1d1c18;
  stroke-width: 1;
  stroke-linejoin: round;
}

path.edge {
  fill: none;
}

.browser,
.comments {
  position: relative;
  width: 307px;
}

.panel-head {
  display: flex;
  align-items: center;
  box-sizing: border-box;
  height: 25px;
  padding: 0 1px 0 4px;
  border: 1px solid #a9a9a9;
  border-left-color: #bdbdbd;
  background: #d1d1d1;
}

.panel-head h2 {
  flex: 1;
  margin: 0;
  color: #505050;
  font-size: 12px;
  font-weight: normal;
}

.collapse {
  margin-right: 11px;
  fill: #222;
}

.round {
  margin-right: 8px;
  border-radius: 50%;
  background: #222;
}

.round path {
  stroke: #fff;
}

.comments h2 {
  padding-left: 22px;
}

.tree {
  display: flex;
  flex-direction: column;
  justify-content: space-between;
  height: 217px;
  margin: 5px 0 0;
  padding: 0;
  list-style: none;
}

.node {
  display: flex;
  align-items: center;
  height: 20px;
}

.level-0 {
  padding-left: 18px;
}

.level-1 {
  padding-left: 36px;
}

.level-2 {
  padding-left: 73px;
}

.arrow {
  width: 9px;
  height: 10px;
  margin-right: 10px;
}

.opened {
  fill: #555;
  stroke: #111;
}

.closed {
  fill: #fff;
  stroke: #444;
}

.chip {
  display: flex;
  align-items: center;
  height: 20px;
  padding: 0 8px 0 3px;
  background: #cfcfcf;
  white-space: nowrap;
}

.chip span {
  padding-left: 14px;
}

.bulb {
  width: 12px;
  height: 16px;
  margin: 0 12px 0 2px;
}

.bulb.on {
  color: #fff3a6;
}

.bulb.off {
  color: #9cc4ea;
}

.node-icon {
  width: 16px;
  height: 16px;
  color: #777;
}

.chip.root {
  box-sizing: border-box;
  width: 240px;
  border: 2px solid #a2a2a2;
  background: #7d7d7d;
  padding: 0 0 0 3px;
  color: #fff;
  font-weight: bold;
}

.root .bulb {
  margin-left: 0;
}

.radio-cell {
  display: flex;
  align-items: center;
  justify-content: center;
  width: 25px;
  height: 20px;
  background: #cfcfcf;
}

.radio-cell input {
  width: 14px;
  height: 14px;
  margin: 0;
  border: 1px solid #777;
  border-radius: 50%;
  background: radial-gradient(#333 0 2px, #f0f0f0 3px);
  appearance: none;
}

/* 导航栏 */
.nav-bars {
  position: absolute;
  right: 0;
  bottom: 4px;
  left: 13px;
  display: flex;
  justify-content: center;
  gap: 6px;
  pointer-events: none;
}

.nav-bar {
  display: flex;
  align-items: center;
  gap: 2px;
  height: 24px;
  padding: 0 0 0 2px;
  background: #cfcfcf;
  pointer-events: auto;
}

.nav-bar button {
  gap: 4px;
}

.nav-bar .plain {
  margin-right: 7px;
}

.nav-bar.tight {
  gap: 3px;
  padding: 0 1px 0 2px;
}

.nav-bar.tight button {
  gap: 1px;
}

.nav-bar svg {
  width: 18px;
  height: 18px;
}

/* 视图方块 */
.view-cube {
  position: absolute;
  top: 40px;
  right: 0;
}

.dash {
  fill: none;
  stroke: #8f8f8f;
  stroke-dasharray: 6 2;
}

.face {
  fill: #777;
  font: italic bold 10px 'Liberation Sans', sans-serif;
}

.face.bottom {
  font-size: 9px;
  font-style: normal;
}

.axis-z {
  fill: #7a78ee;
  font: bold 12px 'Liberation Sans', sans-serif;
}

.axis-x {
  fill: #f07f7f;
  font: 12px 'Liberation Sans', sans-serif;
}

/* 时间轴 */
.scroll {
  box-sizing: border-box;
  height: 11px;
  padding-top: 2px;
  border-top: 1px solid #c4c4c4;
  background: #dedede;
}

.thumb {
  width: 48.4%;
  height: 7px;
  border-radius: 0 4px 4px 0;
  background: #8f8f8f;
}

.track {
  display: flex;
  height: 39px;
  background: #cdcdcd;
}

.playback {
  display: flex;
  gap: 11px;
  width: 135px;
  padding: 7px 0 0 6px;
  box-sizing: border-box;
}

.playback button {
  height: 16px;
}

.playback svg {
  width: 14px;
  height: 16px;
  fill: #484848;
}

.steps {
  position: relative;
  display: flex;
  flex: 1;
  margin-left: 6px;
}

.step {
  position: relative;
  display: flex;
  flex: 1;
  justify-content: center;
  padding-top: 8px;
  height: 27px;
  background:
    linear-gradient(#4a4a4a, #4a4a4a) center 29px / 2px 5px no-repeat,
    linear-gradient(#4a4a4a, #4a4a4a) 0 33px / 100% 2px no-repeat;
}

.step:first-child {
  background:
    linear-gradient(#4a4a4a, #4a4a4a) center 29px / 2px 5px no-repeat,
    linear-gradient(#4a4a4a, #4a4a4a) right 33px / 50% 2px no-repeat;
}

.step-icon {
  width: 18px;
  height: 18px;
  color: #555;
  opacity: 0.3;
}

.done .step-icon {
  color: #111;
  opacity: 1;
}

.marker {
  position: absolute;
  z-index: 1;
  top: 3px;
  right: -6px;
  width: 12px;
  height: 32px;
  fill: #5a5a5a;
}

.dashes {
  width: 6px;
  margin: 33px 24px 0 0;
  height: 2px;
  background: repeating-linear-gradient(90deg, transparent 0 1px, #4a4a4a 1px 3px);
}

.more {
  align-self: center;
  width: 2px;
  height: 4px;
  background: #333;
}
</style>
